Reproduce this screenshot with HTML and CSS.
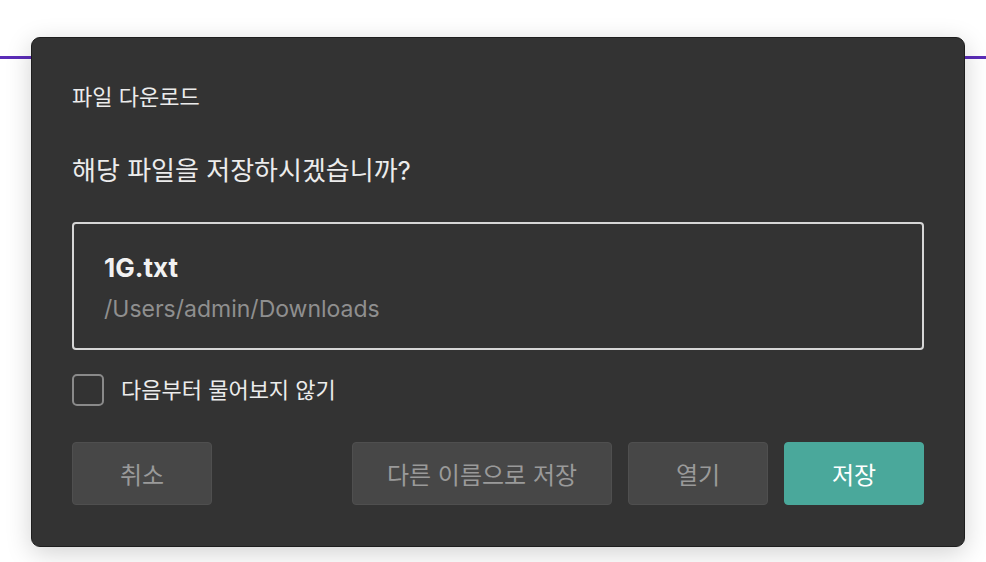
FILE: index.html
```html
<!DOCTYPE html>
<html lang="ko">
<head>
<meta charset="utf-8">
<link rel="stylesheet" href="styles.css">
</head>
<body>
<div class="page-bar"></div>
<div class="dialog">
  <div class="title">파일 다운로드</div>
  <div class="question">해당 파일을 저장하시겠습니까?</div>
  <div class="file-box">
    <div class="file-name">1G.txt</div>
    <div class="file-path">/Users/admin/Downloads</div>
  </div>
  <label class="check-row">
    <span class="checkbox"></span>
    <span class="check-label">다음부터 물어보지 않기</span>
  </label>
  <div class="actions">
    <button class="btn btn-cancel">취소</button>
    <div class="actions-right">
      <button class="btn btn-saveas">다른 이름으로 저장</button>
      <button class="btn btn-open">열기</button>
      <button class="btn btn-primary">저장</button>
    </div>
  </div>
</div>
</body>
</html>
```
FILE: styles.css
```css
* { box-sizing: border-box; }
html, body {
  margin: 0;
  padding: 0;
  width: 986px;
  height: 562px;
  overflow: hidden;
  background: #ffffff;
  font-family: Inter, "Noto Sans CJK KR", sans-serif;
}
.page-bar {
  height: 59px;
  border-bottom: 3px solid #5b2db8;
}
.dialog {
  position: absolute;
  left: 31px;
  top: 37px;
  width: 934px;
  height: 510px;
  background: #333333;
  border: 1px solid #1e1e1e;
  border-radius: 9px;
  box-shadow: 0 6px 26px rgba(0, 0, 0, 0.18);
  padding: 45px 40px 0 40px;
  display: flex;
  flex-direction: column;
  color: #ececec;
}
.title {
  font-size: 22px;
  line-height: 28px;
  height: 28px;
}
.question {
  margin-top: 45px;
  font-size: 26px;
  line-height: 30px;
  height: 30px;
}
.file-box {
  margin-top: 36px;
  height: 128px;
  border: 2px solid #d6d6d6;
  border-radius: 4px;
  padding: 30px 30px 0 30px;
}
.file-name {
  font-size: 26px;
  font-weight: 700;
  line-height: 28px;
  color: #f2f2f2;
}
.file-path {
  margin-top: 13px;
  font-size: 23px;
  line-height: 28px;
  color: #8f8f8f;
}
.check-row {
  margin-top: 24px;
  display: flex;
  align-items: center;
  height: 32px;
}
.checkbox {
  width: 32px;
  height: 32px;
  border: 2px solid #8a8a8a;
  border-radius: 5px;
}
.check-label {
  margin-left: 17px;
  font-size: 22px;
  line-height: 28px;
  color: #ececec;
}
.actions {
  margin-top: 36px;
  display: flex;
  justify-content: space-between;
}
.actions-right {
  display: flex;
  gap: 16px;
}
.btn {
  height: 63px;
  width: 140px;
  border: 1px solid #4f4f4f;
  border-radius: 4px;
  background: #474747;
  color: #9a9a9a;
  font-family: Inter, "Noto Sans CJK KR", sans-serif;
  font-size: 24px;
  padding: 0;
}
.btn-saveas { width: 260px; }
.btn-primary {
  background: #4aa89b;
  border-color: #4aa89b;
  color: #ffffff;
}
```
